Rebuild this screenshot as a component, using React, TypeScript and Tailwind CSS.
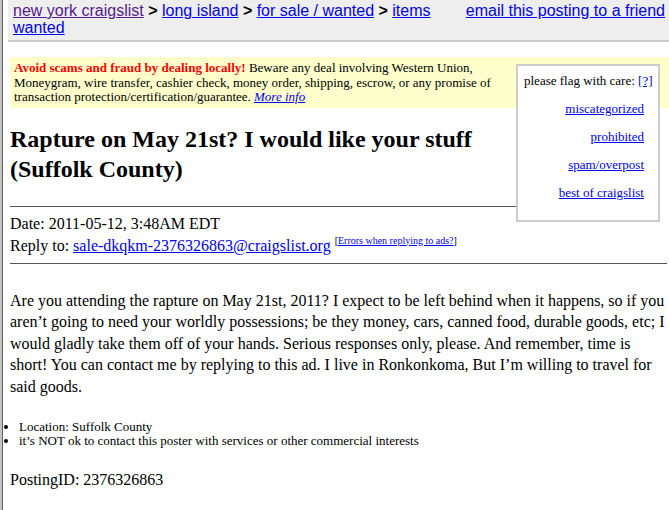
import React from 'react';

const serif = 'font-["Liberation_Serif","Times_New_Roman",serif]';
const sans = 'font-["Liberation_Sans",Arial,sans-serif]';

const flagLinks = ['miscategorized', 'prohibited', 'spam/overpost', 'best of craigslist'];

function Header() {
  return (
    <div className={`ml-[5px] flex bg-[#eeeeee] border-b-2 border-[#cccccc] pl-[5px] pt-[2px] h-[42px] text-[16px] leading-[17px] ${sans}`}>
      <div className="w-[440px]">
        <a href="#" className="underline text-[#551a8b]">new york craigslist</a>
        <b> &gt; </b>
        <a href="#" className="underline text-[#0000ee]">long island</a>
        <b> &gt; </b>
        <a href="#" className="underline text-[#0000ee]">for sale / wanted</a>
        <b> &gt; </b>
        <a href="#" className="underline text-[#0000ee]">items wanted</a>
      </div>
      <div className="flex-1 text-right pr-[4px]">
        <a href="#" className="underline text-[#0000ee]">email this posting to a friend</a>
      </div>
    </div>
  );
}

function FlagBox() {
  return (
    <div className="float-right mt-[7px] mr-[9px] w-[144px] h-[158px] border-2 border-[#cccccc] bg-white px-[6px] pt-[7px] text-[13px] leading-[15px]">
      <div className="whitespace-nowrap">
        please flag with care: <a href="#" className="underline text-[#0000ee]">[?]</a>
      </div>
      <div className="mt-[13px] flex flex-col items-end gap-[13px] pr-[8px]">
        {flagLinks.map((l) => (
          <a key={l} href="#" className="underline text-[#0000ee]">{l}</a>
        ))}
      </div>
    </div>
  );
}

export default function App() {
  return (
    <div className="min-h-[510px] bg-white border-l-2 border-[#c4c4c4] text-black">
      <div className="min-h-[510px] border-l border-[#5f5f5f]">
        <Header />
        <div className={`pl-[7px] pt-[15px] ${serif}`}>
          <FlagBox />
          <div className="bg-[#ffffcc] pl-[4px] pr-[2px] pt-[4px] pb-[3px] text-[13px] leading-[14.5px]">
            <b className="text-[#ff0000]">Avoid scams and fraud by dealing locally!</b> Beware any deal involving Western Union,
            Moneygram, wire transfer, cashier check, money order, shipping, escrow, or any promise of
            transaction protection/certification/guarantee. <a href="#" className="italic underline text-[#0000ee]">More info</a>
          </div>
          <h2 className="mt-[16px] text-[24px] leading-[30px] font-bold">
            Rapture on May 21st? I would like your stuff (Suffolk County)
          </h2>
          <hr className="mt-[22px] overflow-hidden border-0 border-t border-[#555555] mr-[8px]" />
          <div className="mt-[6px] text-[16px] leading-[22px]">
            <div>Date: 2011-05-12, 3:48AM EDT</div>
            <div>
              Reply to: <a href="#" className="underline text-[#0000ee]">sale-dkqkm-2376326863@craigslist.org</a>{' '}
              <sup className="text-[10px] align-[2px]">
                [<a href="#" className="underline text-[#0000ee]">Errors when replying to ads?</a>]
              </sup>
            </div>
          </div>
          <hr className="clear-both mt-[6px] border-0 border-t border-[#555555] mr-[2px]" />
          <p className="mt-[26px] pr-[4px] text-[16px] leading-[21.5px]">
            Are you attending the rapture on May 21st, 2011? I expect to be left behind when it happens, so if you
            aren’t going to need your worldly possessions; be they money, cars, canned food, durable goods, etc; I
            would gladly take them off of your hands. Serious responses only, please. And remember, time is
            short! You can contact me by replying to this ad. I live in Ronkonkoma, But I’m willing to travel for
            said goods.
          </p>
          <ul className="mt-[23px] -ml-[4px] pl-[13px] list-disc text-[13px] leading-[14px]">
            <li>Location: Suffolk County</li>
            <li>it’s NOT ok to contact this poster with services or other commercial interests</li>
          </ul>
          <div className="mt-[22px] text-[16px] leading-[20px]">PostingID: 2376326863</div>
        </div>
      </div>
    </div>
  );
}
